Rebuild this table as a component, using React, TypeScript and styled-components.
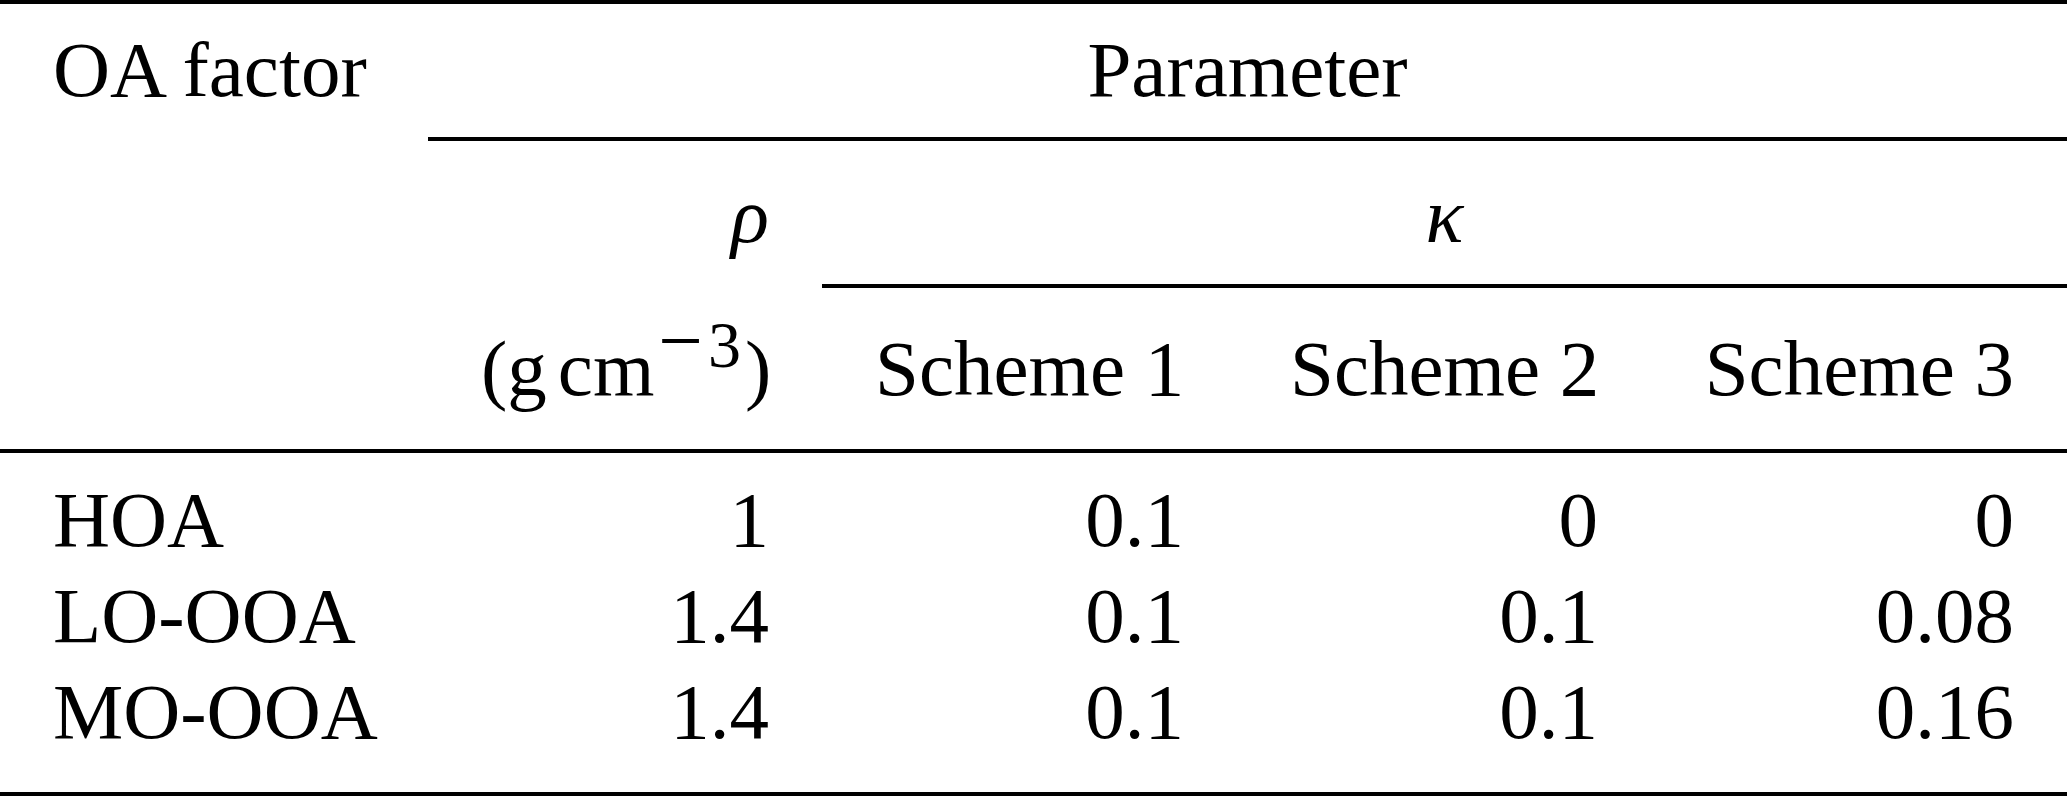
import React from "react";
import styled, { createGlobalStyle } from "styled-components";

const GlobalStyle = createGlobalStyle`
  html, body {
    margin: 0;
    padding: 0;
    background: #ffffff;
  }
  body {
    font-family: "Liberation Serif", "Times New Roman", serif;
  }
`;

const Table = styled.div`
  display: grid;
  grid-template-columns: 428px 394px 415px 414px 416px;
  grid-template-rows: 4px 133px 4px 143px 4px 161px 4px 115px 96px 128px 4px;
  width: 2067px;
  font-family: "Liberation Serif", "Times New Roman", serif;
  font-size: 79px;
  color: #000;
  background: #fff;
`;

const Rule = styled.div<{ $row: number; $from: number }>`
  grid-row: ${(p) => p.$row};
  grid-column: ${(p) => p.$from} / -1;
  background: #000;
`;

type Align = "left" | "right" | "center";

const Cell = styled.div<{
  $row: number;
  $col: number;
  $span?: number;
  $align: Align;
  $pt: number;
}>`
  grid-row: ${(p) => p.$row};
  grid-column: ${(p) => p.$col} / span ${(p) => p.$span ?? 1};
  align-self: start;
  text-align: ${(p) => p.$align};
  padding: ${(p) => p.$pt}px 53px 0;
  line-height: 96px;
  white-space: nowrap;
`;

const MathVar = styled.span`
  font-style: italic;
`;

const ThinGap = styled.span`
  display: inline-block;
  width: 11px;
`;

const Sup = styled.span`
  font-size: 66px;
  line-height: 0;
  vertical-align: 28px;
`;

const SupMinus = styled.span`
  font-size: 79px;
  margin: 0 5px 0 4px;
`;

const SupDigit = styled.span`
  margin-right: 4px;
`;

const rows: { label: string; values: string[] }[] = [
  { label: "HOA", values: ["1", "0.1", "0", "0"] },
  { label: "LO-OOA", values: ["1.4", "0.1", "0.1", "0.08"] },
  { label: "MO-OOA", values: ["1.4", "0.1", "0.1", "0.16"] },
];

const dataRowStart = 8;
const dataPad = [19.4, 0, 0];

export default function App() {
  return (
    <>
      <GlobalStyle />
      <Table>
        <Rule $row={1} $from={1} />

        <Cell $row={2} $col={1} $align="left" $pt={18.4}>
          OA factor
        </Cell>
        <Cell $row={2} $col={2} $span={4} $align="center" $pt={18.4}>
          Parameter
        </Cell>

        <Rule $row={3} $from={2} />

        <Cell $row={4} $col={2} $align="right" $pt={27.4}>
          <MathVar>ρ</MathVar>
        </Cell>
        <Cell $row={4} $col={3} $span={3} $align="center" $pt={27.4}>
          <MathVar>κ</MathVar>
        </Cell>

        <Rule $row={5} $from={3} />

        <Cell $row={6} $col={2} $align="right" $pt={33.4}>
          (g
          <ThinGap />
          cm
          <Sup>
            <SupMinus>−</SupMinus>
            <SupDigit>3</SupDigit>
          </Sup>
          )
        </Cell>
        <Cell $row={6} $col={3} $align="right" $pt={33.4}>
          Scheme 1
        </Cell>
        <Cell $row={6} $col={4} $align="right" $pt={33.4}>
          Scheme 2
        </Cell>
        <Cell $row={6} $col={5} $align="right" $pt={33.4}>
          Scheme 3
        </Cell>

        <Rule $row={7} $from={1} />

        {rows.map((r, i) => (
          <React.Fragment key={r.label}>
            <Cell
              $row={dataRowStart + i}
              $col={1}
              $align="left"
              $pt={dataPad[i]}
            >
              {r.label}
            </Cell>
            {r.values.map((v, j) => (
              <Cell
                key={j}
                $row={dataRowStart + i}
                $col={2 + j}
                $align="right"
                $pt={dataPad[i]}
              >
                {v}
              </Cell>
            ))}
          </React.Fragment>
        ))}

        <Rule $row={11} $from={1} />
      </Table>
    </>
  );
}
